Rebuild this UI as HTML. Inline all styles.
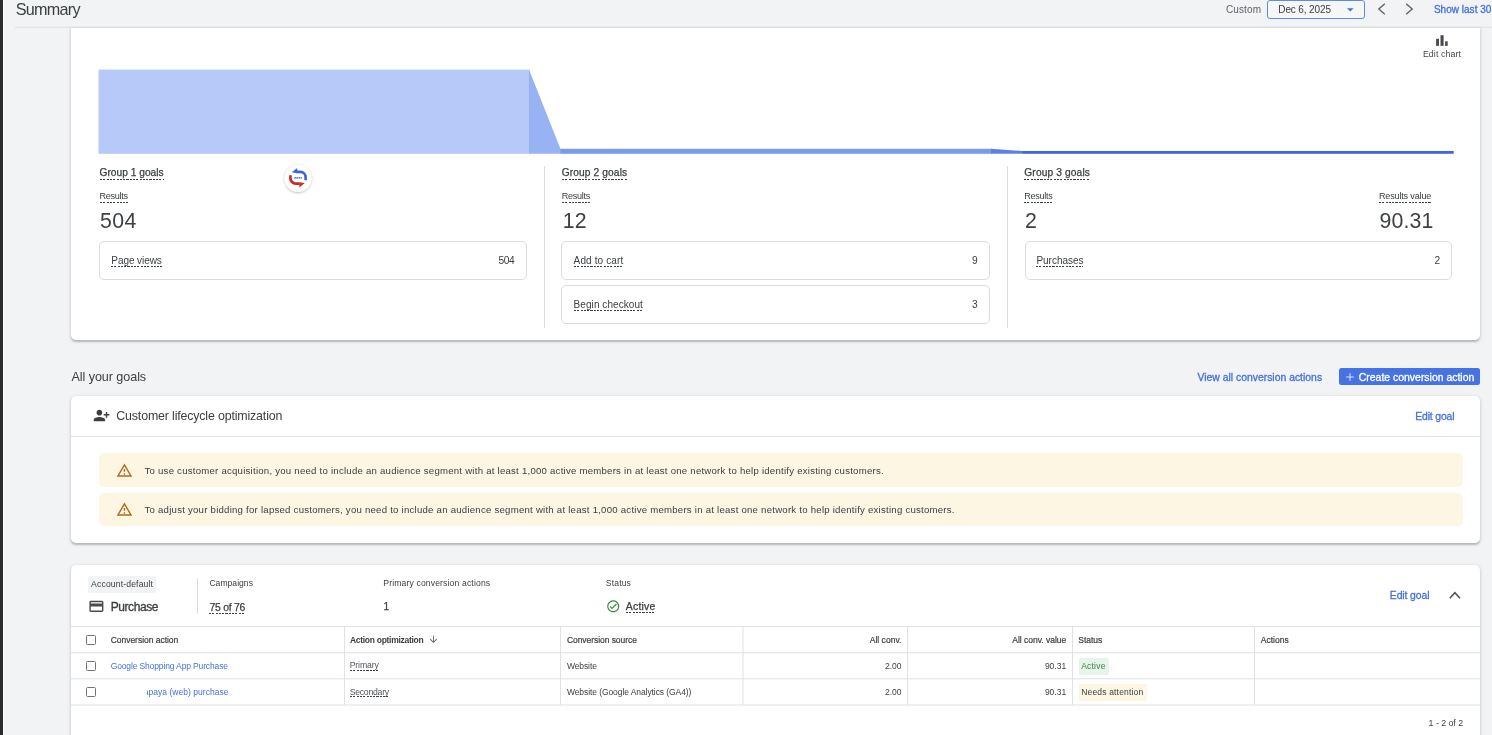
<!DOCTYPE html>
<html lang="en"><head><meta charset="utf-8"><title>Summary</title>
<style>
html,body{margin:0;padding:0}
body{width:1492px;height:735px;overflow:hidden;position:relative;background:#f1f3f4;font-family:"Liberation Sans",Arial,sans-serif}
#app{position:absolute;left:0;top:0;width:1492px;height:735px;overflow:hidden;will-change:transform}
.t{position:absolute;white-space:nowrap;display:block}
.ic{position:absolute;display:block;overflow:visible}
.ul{position:absolute;display:block;height:1px;background:repeating-linear-gradient(90deg,#3c4043 0,#3c4043 2.1px,transparent 2.1px,transparent 3.3px)}
.card{position:absolute;background:#fff;box-shadow:0 1.5px 1.4px rgba(60,64,67,.22),0 1px 3px 1px rgba(60,64,67,.13)}
.vl{position:absolute;width:1px;background:#dadce0}
.box{position:absolute;border:1px solid #dadce0;border-radius:5px;background:#fff}
</style></head>
<body>
<div id="app">
<div style="position:absolute;left:0;top:0;width:3px;height:735px;background:#2b2b2d"></div>
<div style="position:absolute;left:3px;top:0;width:1.2px;height:735px;background:#fff"></div>
<span class="t" style="top:0.00px;font-size:16.2px;line-height:19.44px;color:#3c4043;letter-spacing:-0.718px;left:15.70px;">Summary</span>
<span class="t" style="top:4.00px;font-size:10px;line-height:12.00px;color:#5f6368;letter-spacing:0.109px;left:1226.00px;">Custom</span>
<div style="position:absolute;left:1267px;top:-0.2px;width:95.6px;height:17px;border:1.2px solid #6389e6;border-radius:3px;background:#f4f6f8"></div>
<span class="t" style="top:4.00px;font-size:10px;line-height:12.00px;color:#3c4043;letter-spacing:-0.123px;left:1278.30px;">Dec 6, 2025</span>
<svg class="ic" style="left:1347.4px;top:8.2px" width="6.6" height="3.8" viewBox="0 0 10 5"><path d="M0 0h10L5 5z" fill="#4471e0"/></svg>
<svg class="ic" style="left:1376px;top:2px" width="12" height="14" viewBox="0 0 12 14"><path d="M8.8 1.8 2.8 7l6 5.2" fill="none" stroke="#5f6368" stroke-width="1.4"/></svg>
<svg class="ic" style="left:1403px;top:2px" width="12" height="14" viewBox="0 0 12 14"><path d="M3.2 1.8 9.2 7l-6 5.2" fill="none" stroke="#5f6368" stroke-width="1.4"/></svg>
<span class="t" style="top:4.00px;font-size:10px;line-height:12.00px;color:#4471e0;letter-spacing:0.022px;-webkit-text-stroke:0.3px #4471e0;left:1433.90px;">Show last 30</span>
<svg class="ic" style="left:0;top:24px" width="1492" height="6" viewBox="0 24 1492 6"><rect x="15" y="26.7" width="1477" height="1.1" fill="#dfe1e5"/></svg>
<div class="card" style="left:70.5px;top:28px;width:1409.5px;height:312px;border-radius:0 0 5px 5px"></div>
<svg class="ic" style="left:1435px;top:34px" width="14" height="13" viewBox="0 0 14 13"><rect x="1.1" y="4.8" width="2.9" height="7.1" fill="#484b50"/><rect x="5.5" y="1.2" width="3.1" height="10.7" fill="#484b50"/><rect x="10.1" y="7.3" width="2.6" height="4.6" fill="#484b50"/></svg>
<span class="t" style="top:49.00px;font-size:8.8px;line-height:10.56px;color:#45484d;letter-spacing:0.092px;left:1422.90px;">Edit chart</span>
<svg class="ic" style="left:0;top:60px" width="1492" height="100" viewBox="0 60 1492 100">
<rect x="98.5" y="69.6" width="431.2" height="84.2" fill="#b7c9f8"/>
<polygon points="529,69.6 560.5,148.9 561,148.9 561,153.8 529,153.8" fill="#98b3f4"/>
<rect x="560.5" y="148.8" width="431.2" height="5" fill="#7a9aef"/>
<polygon points="991,148.8 1022.7,151 1023.3,151 1023.3,153.8 991,153.8" fill="#5b80ea"/>
<rect x="1022.7" y="151" width="431" height="2.8" fill="#3d68df"/>
</svg>
<div class="vl" style="left:543.7px;top:166px;height:162px"></div>
<div class="vl" style="left:1006.9px;top:166px;height:162px"></div>
<div class="box" style="left:99px;top:241px;width:426px;height:36.6px"></div>
<div class="box" style="left:561px;top:241px;width:427px;height:36.6px"></div>
<div class="box" style="left:561px;top:285px;width:427px;height:36.6px"></div>
<div class="box" style="left:1024.5px;top:241px;width:425.5px;height:36.6px"></div>
<span class="t" style="top:167.00px;font-size:10.2px;line-height:12.24px;color:#3c4043;letter-spacing:0.010px;-webkit-text-stroke:0.25px #3c4043;left:99.50px;">Group 1 goals</span>
<i class="ul" style="left:99.50px;top:179px;width:64.20px;"></i>
<span class="t" style="top:167.00px;font-size:10.2px;line-height:12.24px;color:#3c4043;letter-spacing:0.119px;-webkit-text-stroke:0.25px #3c4043;left:561.70px;">Group 2 goals</span>
<i class="ul" style="left:561.70px;top:179px;width:65.50px;"></i>
<span class="t" style="top:167.00px;font-size:10.2px;line-height:12.24px;color:#3c4043;letter-spacing:0.135px;-webkit-text-stroke:0.25px #3c4043;left:1024.30px;">Group 3 goals</span>
<i class="ul" style="left:1024.30px;top:179px;width:65.70px;"></i>
<span class="t" style="top:191.00px;font-size:9.1px;line-height:10.92px;color:#3c4043;letter-spacing:-0.291px;left:99.50px;">Results</span>
<i class="ul" style="left:99.50px;top:202px;width:28.60px;"></i>
<span class="t" style="top:191.00px;font-size:9.1px;line-height:10.92px;color:#3c4043;letter-spacing:-0.291px;left:561.70px;">Results</span>
<i class="ul" style="left:561.70px;top:202px;width:28.60px;"></i>
<span class="t" style="top:191.00px;font-size:9.1px;line-height:10.92px;color:#3c4043;letter-spacing:-0.291px;left:1024.30px;">Results</span>
<i class="ul" style="left:1024.30px;top:202px;width:28.60px;"></i>
<span class="t" style="top:191.00px;font-size:9.1px;line-height:10.92px;color:#3c4043;letter-spacing:-0.177px;left:1378.90px;">Results value</span>
<i class="ul" style="left:1378.90px;top:202px;width:52.50px;"></i>
<span class="t" style="top:209.00px;font-size:21.3px;line-height:25.56px;color:#3c4043;letter-spacing:0.431px;left:99.90px;">504</span>
<span class="t" style="top:209.00px;font-size:21.3px;line-height:25.56px;color:#3c4043;letter-spacing:0.108px;left:562.80px;">12</span>
<span class="t" style="top:209.00px;font-size:21.3px;line-height:25.56px;color:#3c4043;left:1024.90px;">2</span>
<span class="t" style="top:209.00px;font-size:21.3px;line-height:25.56px;color:#3c4043;letter-spacing:0.149px;left:1379.40px;">90.31</span>
<span class="t" style="top:255.00px;font-size:10px;line-height:12.00px;color:#3c4043;letter-spacing:-0.071px;left:111.30px;">Page views</span>
<i class="ul" style="left:111.30px;top:266px;width:50.50px;"></i>
<span class="t" style="top:255.00px;font-size:10.2px;line-height:12.24px;color:#3c4043;letter-spacing:-0.459px;left:498.60px;">504</span>
<span class="t" style="top:255.00px;font-size:10px;line-height:12.00px;color:#3c4043;letter-spacing:0.124px;left:573.60px;">Add to cart</span>
<i class="ul" style="left:573.60px;top:266px;width:49.60px;"></i>
<span class="t" style="top:255.00px;font-size:10.2px;line-height:12.24px;color:#3c4043;left:971.90px;">9</span>
<span class="t" style="top:299.00px;font-size:10px;line-height:12.00px;color:#3c4043;letter-spacing:0.071px;left:573.60px;">Begin checkout</span>
<i class="ul" style="left:573.60px;top:310px;width:69.30px;"></i>
<span class="t" style="top:299.00px;font-size:10.2px;line-height:12.24px;color:#3c4043;left:971.90px;">3</span>
<span class="t" style="top:255.00px;font-size:10px;line-height:12.00px;color:#3c4043;letter-spacing:-0.018px;left:1036.40px;">Purchases</span>
<i class="ul" style="left:1036.40px;top:266px;width:47.10px;"></i>
<span class="t" style="top:255.00px;font-size:10.2px;line-height:12.24px;color:#3c4043;left:1434.40px;">2</span>
<svg class="ic" style="left:278px;top:158px" width="40" height="40" viewBox="278 158 40 40">
<defs><filter id="sh" x="-30%" y="-30%" width="160%" height="170%"><feDropShadow dx="0" dy="0.8" stdDeviation="1.1" flood-color="#3c4043" flood-opacity=".38"/></filter></defs>
<circle cx="298.1" cy="178.4" r="13.5" fill="#fff" filter="url(#sh)"/>
<path d="M296.5 171.9H300.3A5.3 5.3 0 0 1 305.6 177.2V180.3" fill="none" stroke="#3667cf" stroke-width="2.6"/>
<path d="M291.8 172.2L297.2 168V173.2z" fill="#3667cf"/>
<path d="M290.4 175.3V178.3A5.3 5.3 0 0 0 295.7 183.6H299.6" fill="none" stroke="#c2321a" stroke-width="2.7"/>
<path d="M304.8 183.1L299.3 182.25V187.6z" fill="#c2321a"/>
<path d="M294.3 177.9H301.9" stroke="#4a78d6" stroke-width="1.9" stroke-dasharray="1.6 0.5" opacity=".9"/>
</svg>
<span class="t" style="top:370.00px;font-size:12.6px;line-height:15.12px;color:#3c4043;letter-spacing:-0.072px;left:71.50px;">All your goals</span>
<span class="t" style="top:372.00px;font-size:10.4px;line-height:12.48px;color:#4471e0;letter-spacing:0.005px;-webkit-text-stroke:0.3px #4471e0;left:1197.40px;">View all conversion actions</span>
<div style="position:absolute;left:1339px;top:368.3px;width:141px;height:16.5px;border-radius:2.5px;background:#4673e4"></div>
<svg class="ic" style="left:1346px;top:372.8px" width="8" height="8" viewBox="0 0 8 8"><path d="M4 .2v7.6M.2 4h7.6" stroke="#dfe7fb" stroke-width="1"/></svg>
<span class="t" style="top:372.00px;font-size:10.4px;line-height:12.48px;color:#fff;letter-spacing:0.024px;-webkit-text-stroke:0.3px #fff;left:1358.80px;">Create conversion action</span>
<div class="card" style="left:70.5px;top:396.2px;width:1409.8px;height:146.8px;border-radius:5px"></div>
<svg class="ic" style="left:93.20px;top:406.90px" width="17.10" height="17.10" viewBox="0 0 24 24"><path fill="#3c4043" d="M13 8c0-2.21-1.79-4-4-4S5 5.790 5 8s1.790 4 4 4 4-1.790 4-4zm2 2v2h3v3h2v-3h3v-2h-3V7h-2v3h-3zM1 18v2h16v-2c0-2.660-5.330-4-8-4s-8 1.340-8 4z"/></svg>
<span class="t" style="top:409.00px;font-size:12.4px;line-height:14.88px;color:#3c4043;letter-spacing:-0.157px;left:116.30px;">Customer lifecycle optimization</span>
<span class="t" style="top:411.00px;font-size:10.4px;line-height:12.48px;color:#4471e0;letter-spacing:-0.147px;-webkit-text-stroke:0.3px #4471e0;left:1415.30px;">Edit goal</span>
<div style="position:absolute;left:70.5px;top:435.6px;width:1410px;height:1px;background:#e0e2e4"></div>
<div style="position:absolute;left:99.2px;top:453px;width:1363.6px;height:34.0px;border-radius:5px;background:#fcf6e2"></div>
<svg class="ic" style="left:116.10px;top:462.20px" width="16.90" height="16.90" viewBox="0 0 24 24"><path fill="#ad6a1f" d="M12 5.990L19.530 19H4.470L12 5.990M12 2L1 21h22L12 2zm1 14h-2v2h2v-2zm0-6h-2v4h2v-4z"/></svg>
<div style="position:absolute;left:99.2px;top:493px;width:1363.6px;height:33.0px;border-radius:5px;background:#fcf6e2"></div>
<svg class="ic" style="left:116.10px;top:501.40px" width="16.90" height="16.90" viewBox="0 0 24 24"><path fill="#ad6a1f" d="M12 5.990L19.530 19H4.470L12 5.990M12 2L1 21h22L12 2zm1 14h-2v2h2v-2zm0-6h-2v4h2v-4z"/></svg>
<span class="t" style="top:465.00px;font-size:9.6px;line-height:11.52px;color:#3c4043;letter-spacing:0.242px;left:144.50px;">To use customer acquisition, you need to include an audience segment with at least 1,000 active members in at least one network to help identify existing customers.</span>
<span class="t" style="top:504.00px;font-size:9.6px;line-height:11.52px;color:#3c4043;letter-spacing:0.244px;left:144.50px;">To adjust your bidding for lapsed customers, you need to include an audience segment with at least 1,000 active members in at least one network to help identify existing customers.</span>
<div class="card" style="left:70.5px;top:564.8px;width:1409.5px;height:200px;border-radius:5px 5px 0 0"></div>
<div style="position:absolute;left:88.2px;top:576.3px;width:67.8px;height:16.4px;border-radius:2px;background:#f1f3f4"></div>
<span class="t" style="top:579.00px;font-size:8.6px;line-height:10.32px;color:#3c4043;letter-spacing:0.153px;left:91.10px;">Account-default</span>
<div class="vl" style="left:197px;top:577.8px;height:36px"></div>
<span class="t" style="top:578.00px;font-size:8.6px;line-height:10.32px;color:#3c4043;letter-spacing:0.012px;left:209.40px;">Campaigns</span>
<svg class="ic" style="left:88.00px;top:598.20px" width="16.80" height="16.80" viewBox="0 0 24 24"><path fill="#484b50" d="M20 4H4c-1.110 0-1.990.890-1.990 2L2 18c0 1.110.890 2 2 2h16c1.110 0 2-.890 2-2V6c0-1.110-.890-2-2-2zm0 14H4v-6h16v6zm0-10H4V6h16v2z"/></svg>
<span class="t" style="top:600.00px;font-size:12px;line-height:14.40px;color:#3c4043;letter-spacing:-0.414px;-webkit-text-stroke:0.32px #3c4043;left:110.70px;">Purchase</span>
<span class="t" style="top:602.00px;font-size:10.4px;line-height:12.48px;color:#3c4043;letter-spacing:-0.227px;-webkit-text-stroke:0.25px #3c4043;left:209.40px;">75 of 76</span>
<i class="ul" style="left:209.40px;top:613px;width:36.00px;"></i>
<span class="t" style="top:578.00px;font-size:8.6px;line-height:10.32px;color:#3c4043;letter-spacing:0.146px;left:383.30px;">Primary conversion actions</span>
<span class="t" style="top:601.00px;font-size:10.2px;line-height:12.24px;color:#3c4043;-webkit-text-stroke:0.25px #3c4043;left:383.60px;">1</span>
<span class="t" style="top:578.00px;font-size:8.6px;line-height:10.32px;color:#3c4043;letter-spacing:0.144px;left:605.80px;">Status</span>
<svg class="ic" style="left:605.50px;top:599.40px" width="14.50" height="14.50" viewBox="0 0 24 24"><path fill="#3f8a43" d="M12 2C6.480 2 2 6.480 2 12s4.480 10 10 10 10-4.480 10-10S17.520 2 12 2zm0 18c-4.410 0-8-3.590-8-8s3.590-8 8-8 8 3.590 8 8-3.590 8-8 8zm4.590-12.420L10 14.170l-2.590-2.580L6 13l4 4 8-8z"/></svg>
<span class="t" style="top:600.00px;font-size:10.5px;line-height:12.60px;color:#3c4043;letter-spacing:0.221px;-webkit-text-stroke:0.25px #3c4043;left:625.70px;">Active</span>
<i class="ul" style="left:625.70px;top:612px;width:29.70px;"></i>
<span class="t" style="top:590.00px;font-size:10.4px;line-height:12.48px;color:#4471e0;letter-spacing:-0.097px;-webkit-text-stroke:0.3px #4471e0;left:1389.80px;">Edit goal</span>
<svg class="ic" style="left:1447px;top:589px" width="16" height="12" viewBox="1447 589 16 12"><path d="M1449.8 598.3l5.1-5.6 5.1 5.6" fill="none" stroke="#4d5156" stroke-width="1.5"/></svg>
<svg class="ic" style="left:0;top:620px" width="1492" height="90" viewBox="0 620 1492 90"><rect x="70.5" y="625.95" width="1409.5" height="1" fill="#dfe1e4"/><rect x="70.5" y="652.20" width="1409.5" height="1" fill="#dfe1e4"/><rect x="70.5" y="678.30" width="1409.5" height="1" fill="#dfe1e4"/><rect x="70.5" y="704.50" width="1409.5" height="1" fill="#dfe1e4"/><rect x="343.95" y="626.45" width="1" height="78.5" fill="#dfe1e4"/><rect x="560.00" y="626.45" width="1" height="78.5" fill="#dfe1e4"/><rect x="742.50" y="626.45" width="1" height="78.5" fill="#dfe1e4"/><rect x="906.95" y="626.45" width="1" height="78.5" fill="#dfe1e4"/><rect x="1072.05" y="626.45" width="1" height="78.5" fill="#dfe1e4"/><rect x="1254.00" y="626.45" width="1" height="78.5" fill="#dfe1e4"/></svg>
<div style="position:absolute;left:86.2px;top:634.5px;width:8.1px;height:8.1px;border:1.1px solid #70747a;border-radius:1.5px;background:#fff"></div>
<div style="position:absolute;left:86.2px;top:660.6px;width:8.1px;height:8.1px;border:1.1px solid #70747a;border-radius:1.5px;background:#fff"></div>
<div style="position:absolute;left:86.2px;top:686.8px;width:8.1px;height:8.1px;border:1.1px solid #70747a;border-radius:1.5px;background:#fff"></div>
<span class="t" style="top:635.00px;font-size:8.5px;line-height:10.20px;color:#3c4043;letter-spacing:-0.027px;-webkit-text-stroke:0.2px #3c4043;left:110.70px;">Conversion action</span>
<span class="t" style="top:635.00px;font-size:8.5px;line-height:10.20px;color:#3c4043;letter-spacing:-0.281px;font-weight:bold;left:349.90px;">Action optimization</span>
<svg class="ic" style="left:428.20px;top:634.20px" width="10.80" height="10.80" viewBox="0 0 24 24"><path fill="#5f6368" d="M20 12l-1.410-1.410L13 16.170V4h-2v12.170l-5.580-5.590L4 12l8 8 8-8z"/></svg>
<span class="t" style="top:635.00px;font-size:8.5px;line-height:10.20px;color:#3c4043;letter-spacing:-0.054px;-webkit-text-stroke:0.2px #3c4043;left:566.90px;">Conversion source</span>
<span class="t" style="top:635.00px;font-size:8.5px;line-height:10.20px;color:#3c4043;letter-spacing:0.026px;-webkit-text-stroke:0.2px #3c4043;left:869.70px;">All conv.</span>
<span class="t" style="top:635.00px;font-size:8.5px;line-height:10.20px;color:#3c4043;letter-spacing:-0.020px;-webkit-text-stroke:0.2px #3c4043;left:1012.30px;">All conv. value</span>
<span class="t" style="top:635.00px;font-size:8.5px;line-height:10.20px;color:#3c4043;letter-spacing:-0.039px;-webkit-text-stroke:0.2px #3c4043;left:1078.30px;">Status</span>
<span class="t" style="top:635.00px;font-size:8.5px;line-height:10.20px;color:#3c4043;letter-spacing:0.038px;-webkit-text-stroke:0.2px #3c4043;left:1260.70px;">Actions</span>
<span class="t" style="top:661.00px;font-size:8.5px;line-height:10.20px;color:#4471e0;letter-spacing:-0.136px;left:110.70px;">Google Shopping App Purchase</span>
<span class="t" style="top:660.00px;font-size:8.7px;line-height:10.44px;color:#50545a;letter-spacing:-0.128px;left:349.70px;">Primary</span>
<i class="ul" style="left:349.70px;top:670px;width:29.20px;"></i>
<span class="t" style="top:661.00px;font-size:8.5px;line-height:10.20px;color:#3c4043;letter-spacing:-0.092px;left:566.90px;">Website</span>
<span class="t" style="top:661.00px;font-size:8.5px;line-height:10.20px;color:#3c4043;letter-spacing:-0.048px;left:885.00px;">2.00</span>
<span class="t" style="top:661.00px;font-size:8.5px;line-height:10.20px;color:#3c4043;letter-spacing:0.007px;left:1044.90px;">90.31</span>
<div style="position:absolute;left:1078.6px;top:658.3px;width:30px;height:16.4px;border-radius:2px;background:#e7f4ea"></div>
<span class="t" style="top:661.00px;font-size:8.5px;line-height:10.20px;color:#3c8043;letter-spacing:0.211px;left:1081.20px;">Active</span>
<span class="t" style="top:687.00px;font-size:8.5px;line-height:10.20px;color:#4471e0;letter-spacing:0.031px;left:143.80px;">apaya (web) purchase</span>
<div style="position:absolute;left:140px;top:684px;width:6.9px;height:16px;background:#fff"></div>
<span class="t" style="top:687.00px;font-size:8.7px;line-height:10.44px;color:#50545a;letter-spacing:-0.262px;left:349.70px;">Secondary</span>
<i class="ul" style="left:349.70px;top:696px;width:39.50px;"></i>
<span class="t" style="top:687.00px;font-size:8.5px;line-height:10.20px;color:#3c4043;letter-spacing:-0.078px;left:566.90px;">Website (Google Analytics (GA4))</span>
<span class="t" style="top:687.00px;font-size:8.5px;line-height:10.20px;color:#3c4043;letter-spacing:-0.048px;left:885.00px;">2.00</span>
<span class="t" style="top:687.00px;font-size:8.5px;line-height:10.20px;color:#3c4043;letter-spacing:0.007px;left:1044.90px;">90.31</span>
<div style="position:absolute;left:1078.6px;top:683.9px;width:68px;height:16.7px;border-radius:2px;background:#fcf6e2"></div>
<span class="t" style="top:687.00px;font-size:8.5px;line-height:10.20px;color:#3c4043;letter-spacing:0.176px;left:1081.20px;">Needs attention</span>
<span class="t" style="top:718.00px;font-size:8.8px;line-height:10.56px;color:#3c4043;letter-spacing:-0.026px;left:1428.60px;">1 - 2 of 2</span>
</div>
</body></html>
